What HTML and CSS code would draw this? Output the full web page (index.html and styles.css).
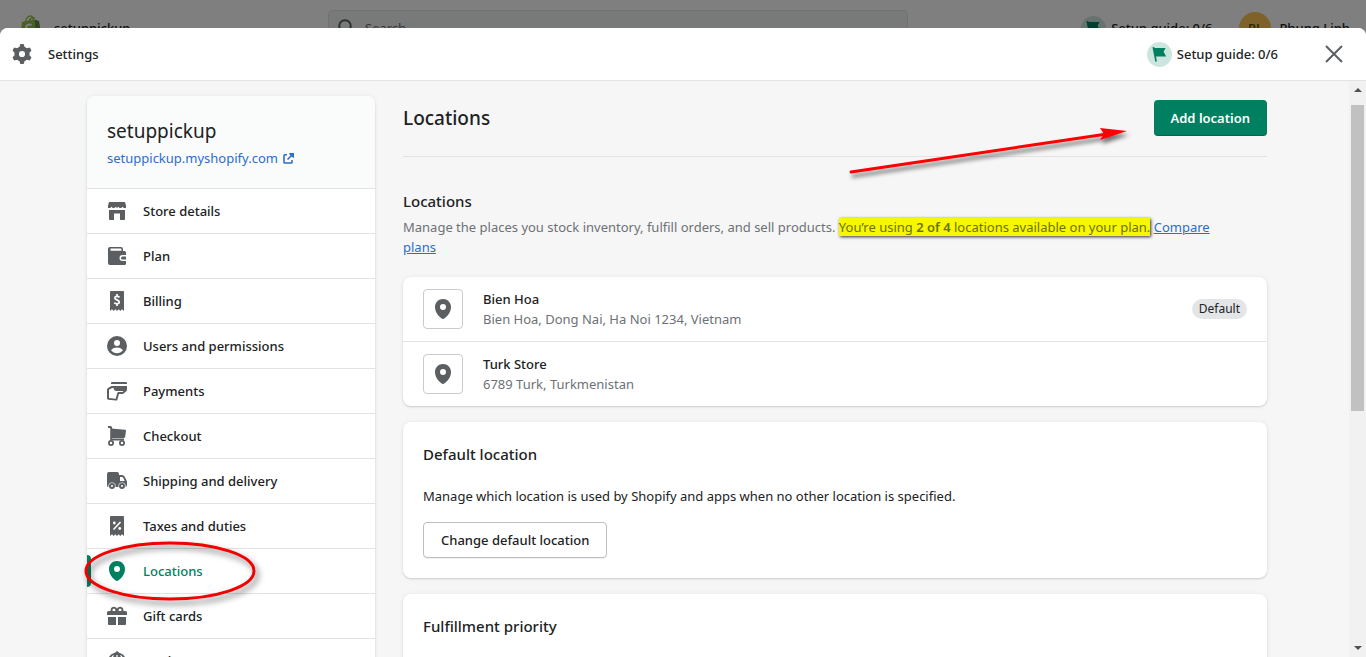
FILE: index.html
```html
<!DOCTYPE html>
<html lang="en">
<head>
<meta charset="utf-8">
<title>setuppickup - Settings - Locations</title>
<link rel="stylesheet" href="styles.css">
</head>
<body>
<svg class="sprite" aria-hidden="true">
  <symbol id="pin" viewBox="0 0 20 20"><path fill-rule="evenodd" d="M10 0c-4.411 0-8 3.500-8 7.900 0 7.600 7.012 11.700 7.416 11.950a1.200 1.200 0 0 0 1.168 0c.404-.25 7.416-4.350 7.416-11.950 0-4.400-3.589-7.900-8-7.900zm0 11a3 3 0 1 1 0-6 3 3 0 0 1 0 6z"/></symbol>
  <symbol id="flag" viewBox="0 0 25 25"><circle cx="12.500" cy="12.500" r="12.500" fill="#cce6df"/><path d="M5.500 5.300L7.200 5l.4 1h11l-2 3.700 2.600 4.700H9l.9 5.100-1.600.3z"/></symbol>
</svg>

<div class="topbar">
  <div class="brand">
    <svg class="bag" viewBox="0 0 22 26" aria-hidden="true">
      <path d="M5 8C6 3 8.500 1 10.500 1S14 3.500 13.500 7M8 8c1-4 4-6 7-5" fill="none" stroke="#95bf47" stroke-width="1.300"/>
      <path d="M2 7l12.500-2.500L15 25 0 22z" fill="#95bf47"/><path d="M14.500 4.500l4.500 1.500 3 17-7 2z" fill="#5e8e3e"/>
      <path d="M11.500 10c-3-1.500-5.500.2-5.300 2.300.2 2.300 4 2.400 3.800 4.700-.2 2-2.500 2-5 .7" fill="none" stroke="#fff" stroke-width="2"/>
    </svg>
    <span>setuppickup</span>
  </div>
  <label class="search">
    <svg viewBox="0 0 20 20" aria-hidden="true"><circle cx="8" cy="8" r="5.800" fill="none" stroke="#5c5f62" stroke-width="2"/><path d="M12.500 12.500l6 6" stroke="#5c5f62" stroke-width="2"/></svg>
    <input type="search" placeholder="Search" aria-label="Search">
  </label>
  <div class="account">
    <a class="guide" href="#"><svg aria-hidden="true"><use href="#flag"/></svg>Setup guide: 0/6</a>
    <button class="user" type="button"><span class="avatar">PL</span>Phung Linh</button>
  </div>
</div>
<div class="backdrop"></div>

<div class="modal" role="dialog" aria-labelledby="modal-title">
  <header class="modal-header">
    <svg class="gear" viewBox="0 0 20 20" aria-hidden="true">
      <circle cx="10" cy="10" r="5.300" fill="none" stroke="#5c5f62" stroke-width="4.400"/>
      <g fill="#5c5f62">
        <path id="tooth" d="M6 4.200l1.500-1.200.5-2.200q.1-.8.900-.8h2.200q.8 0 .9.800l.5 2.200 1.500 1.200z"/>
        <use href="#tooth" transform="rotate(60 10 10)"/><use href="#tooth" transform="rotate(120 10 10)"/><use href="#tooth" transform="rotate(180 10 10)"/><use href="#tooth" transform="rotate(240 10 10)"/><use href="#tooth" transform="rotate(300 10 10)"/>
      </g>
    </svg>
    <h1 id="modal-title">Settings</h1>
    <a class="guide" href="#"><svg aria-hidden="true"><use href="#flag"/></svg>Setup guide: 0/6</a>
    <button class="close" type="button" aria-label="Close"><svg viewBox="0 0 18 18" aria-hidden="true"><path d="M1 1l16 16M17 1L1 17" stroke="#5c5f62" stroke-width="2"/></svg></button>
  </header>

  <div class="modal-body">
    <div class="scroll">
      <nav class="sidebar card" aria-label="Settings">
        <div class="store">
          <h2>setuppickup</h2>
          <a href="#">setuppickup.myshopify.com
            <svg viewBox="0 0 11 11" aria-hidden="true"><path d="M4 1.700H1.800Q1 1.700 1 2.500v6.700q0 .8.800.8h6.400q.8 0 .8-.8V7" fill="none" stroke="currentColor" stroke-width="1.600"/><path d="M4.500 6.500l5-5" stroke="currentColor" stroke-width="1.600"/><path d="M6 0h5v5L9 4 7 2z"/></svg>
          </a>
        </div>
        <ul>
          <li><a href="#"><svg viewBox="0 0 20 20"><path d="M2 1h16l1 3.500V7h-2.200L15.500 5.700 14.200 7h-1.600l-1.300-1.300L10 7 8.700 5.700 7.400 7H5.800L4.500 5.700 3.200 7H1V4.500z"/><path d="M2 9h16v9q0 1-1 1h-4v-6.500H7V19H3q-1 0-1-1z"/></svg>Store details</a></li>
          <li><a href="#"><svg viewBox="0 0 20 20"><path fill-rule="evenodd" d="M1 3q0-2 2-2h11q2 0 2 2v2h1.500Q19 5 19 6.500V9h-3.500a3 3 0 0 0 0 6H19v2.500q0 1.500-1.500 1.500H3q-2 0-2-2zm2.500-.4v2.200H14.500V3.500q0-.9-.9-.9z"/><path d="M15.500 10.500H19v3h-3.500a1.500 1.500 0 0 1 0-3z"/></svg>Plan</a></li>
          <li><a href="#"><svg viewBox="0 0 20 20"><path d="M3 1q0-1 1-1h12q1 0 1 1v19l-2-1.700L13.300 20l-1.600-1.700L10 20l-1.700-1.700L6.700 20 5 18.300 3 20z"/><path d="M12.500 6.300C11 4.800 7.800 5 7.800 7s4.500 1.700 4.500 4c0 2.200-3.500 2.200-5 .6M10 3v2.500M10 12.500V15" fill="none" stroke="#fff" stroke-width="1.700"/></svg>Billing</a></li>
          <li><a href="#"><svg viewBox="0 0 20 20"><circle cx="10" cy="10" r="10"/><circle cx="10" cy="7" r="3" fill="#fff"/><path d="M4 14.200c1.500-2 4-2.700 6-2.700s4.500.7 6 2.700c-1.700 2-3.700 3-6 3s-4.300-1-6-3z" fill="#fff"/></svg>Users and permissions</a></li>
          <li><a href="#"><svg viewBox="0 0 20 20"><path d="M5 1h14q1 0 1 1v1H4V2q0-1 1-1z"/><path fill-rule="evenodd" d="M4.500 5H20v3.500q0 1.500-1.200 2.300L16.500 12.500Q15.700 13 14.800 13H12l-1.600 5.700q-.3 1-1.300.9L1.200 18.700Q0 18.500 0 17.300V9q0-1.200.9-1.900zM5.200 7L2 8.800V16.900l6.700.8 1.500-5.500q.3-1.200 1.500-1.200h3q1.500 0 1.800-1H9.500Q7 10 6.500 7z"/></svg>Payments</a></li>
          <li><a href="#"><svg viewBox="0 0 20 20"><path d="M1 1h2.200q1 0 1 1v11.500H17" fill="none" stroke="#5c5f62" stroke-width="2"/><path d="M4 2.500l14.200 1.200q.9.100.8 1l-.8 5.800q-.2 1.500-1.700 1.500H4z"/><g fill="#fff" stroke="#5c5f62" stroke-width="1.800"><circle cx="4" cy="17" r="2.100"/><circle cx="15" cy="17" r="2.100"/></g></svg>Checkout</a></li>
          <li><a href="#"><svg viewBox="0 0 20 20"><path fill-rule="evenodd" d="M0 3Q0 1 2 1h8q2 0 2 2v1h3q1.800 0 2.600 1.500l2 4q.4.700.4 1.500v3q0 2-2 2H1.500Q0 16 0 14.500zM13 6v4h4.700l-1.500-3.200Q15.700 6 15 6z"/><circle cx="5" cy="15" r="3.600" fill="#fff"/><circle cx="15" cy="15" r="3.600" fill="#fff"/><g fill="#fff" stroke="#5c5f62" stroke-width="2"><circle cx="5" cy="15" r="2"/><circle cx="15" cy="15" r="2"/></g></svg>Shipping and delivery</a></li>
          <li><a href="#"><svg viewBox="0 0 20 20"><path d="M3 1q0-1 1-1h12q1 0 1 1v19l-2-1.700L13.300 20l-1.600-1.700L10 20l-1.700-1.700L6.700 20 5 18.300 3 20z"/><path d="M6.500 13.500l7-7.500" stroke="#fff" stroke-width="1.600"/><circle cx="7.300" cy="7" r="1.400" fill="#fff"/><circle cx="12.700" cy="12.500" r="1.400" fill="#fff"/></svg>Taxes and duties</a></li>
          <li class="active"><a href="#" aria-current="page"><svg><use href="#pin"/></svg>Locations</a>
            <svg class="circled" viewBox="0 0 184 72" aria-hidden="true"><ellipse cx="86" cy="31" rx="84" ry="28" fill="none" stroke="#f40000" stroke-width="3"/></svg>
          </li>
          <li><a href="#"><svg viewBox="0 0 20 20"><path d="M1.500 5H18.500Q20 5 20 6.500V9H0V6.500Q0 5 1.500 5zM1 11h8v8H2q-1 0-1-1zM11 11h8v7q0 1-1 1h-7z"/><path d="M9.300 6V3.800a2.400 2.400 0 1 0-4.300 1.700M10.700 6V3.800a2.400 2.400 0 1 1 4.300 1.700" fill="none" stroke="#5c5f62" stroke-width="2"/></svg>Gift cards</a></li>
          <li><a href="#"><svg viewBox="0 0 20 20"><path d="M10 0l2.500 2H13q5 1.500 6 7v2H1V9q1-5.500 6-7h.5z"/><path d="M6.500 4.500Q4.500 6 4 9M10 4v5M13.500 4.500Q15.500 6 16 9" fill="none" stroke="#fff" stroke-width="1.200"/></svg>Markets</a></li>
        </ul>
      </nav>

      <main>
        <div class="page-header">
          <h2>Locations</h2>
          <button class="primary" type="button">Add location</button>
          <svg class="arrow" viewBox="0 0 290 60" aria-hidden="true"><path d="M4 50L260 12" stroke="#f00" stroke-width="3" stroke-linecap="round"/><path d="M253 6l27 3-27 9 4-6z" fill="#f00"/></svg>
        </div>

        <section class="intro">
          <h3>Locations</h3>
          <p>Manage the places you stock inventory, fulfill orders, and sell products. <mark>You’re using <b>2 of 4</b> locations available on your plan.</mark> <a href="#">Compare plans</a></p>
        </section>

        <ul class="card locations">
          <li>
            <span class="thumb"><svg aria-hidden="true"><use href="#pin"/></svg></span>
            <div><h4>Bien Hoa</h4><p>Bien Hoa, Dong Nai, Ha Noi 1234, Vietnam</p></div>
            <span class="badge">Default</span>
          </li>
          <li>
            <span class="thumb"><svg aria-hidden="true"><use href="#pin"/></svg></span>
            <div><h4>Turk Store</h4><p>6789 Turk, Turkmenistan</p></div>
          </li>
        </ul>

        <section class="card panel">
          <h3>Default location</h3>
          <p>Manage which location is used by Shopify and apps when no other location is specified.</p>
          <button class="secondary" type="button">Change default location</button>
        </section>

        <section class="card panel">
          <h3>Fulfillment priority</h3>
        </section>
      </main>
    </div>
    <div class="scrollbar" aria-hidden="true">
      <svg viewBox="0 0 8 4"><path d="M0 4l4-4 4 4z"/></svg>
      <div class="track"><div class="grip"></div></div>
      <svg viewBox="0 0 8 4"><path d="M0 0l4 4 4-4z"/></svg>
    </div>
  </div>
</div>
</body>
</html>
```
FILE: styles.css
```css
*, *::before { box-sizing: border-box; }

body, h1, h2, h3, h4, p, ul { margin: 0; padding: 0; }

body {
  height: 100vh;
  overflow: hidden;
  background: #f6f6f7;
  color: #202223;
  font: 400 13px/20px "Noto Sans", "Open Sans", sans-serif;
}

ul { list-style: none; }
button, input { font: inherit; color: inherit; }
button { cursor: pointer; }
a { color: #2c6ecb; text-decoration: none; }
svg { flex: none; fill: #5c5f62; }

.sprite { position: absolute; width: 0; height: 0; }

/* Admin bar behind the dialog */
.topbar {
  display: flex;
  align-items: center;
  height: 56px;
  padding: 0 16px 0 20px;
  background: #fff;
  font-weight: 500;
}
.brand { display: flex; align-items: center; gap: 12px; flex: 0 0 308px; }
.bag { width: 22px; height: 30px; }
.search {
  display: flex;
  align-items: center;
  gap: 6px;
  flex: 0 1 580px;
  height: 36px;
  padding: 0 8px;
  border: 1px solid #e1e3e5;
  border-radius: 4px;
  background: #f1f2f3;
}
.search svg { width: 20px; height: 20px; }
.search input { flex: 1; min-width: 0; border: 0; outline: 0; background: none; font-weight: 400; }
.search input::placeholder { color: #6d7175; }
.account { display: flex; align-items: center; gap: 27px; margin-left: auto; }
.guide { display: flex; align-items: center; gap: 5px; color: #202223; font-weight: 500; white-space: nowrap; }
.guide svg { width: 25px; height: 25px; fill: #008060; }
.user { display: flex; align-items: center; gap: 8px; padding: 0; border: 0; background: none; }
.avatar {
  width: 32px;
  height: 32px;
  border-radius: 50%;
  background: #ffc453;
  line-height: 32px;
  color: #594415;
}
.backdrop { position: absolute; inset: 0; background: rgba(0, 0, 0, .5); }

/* Dialog */
.modal {
  position: absolute;
  inset: 28px 0 0;
  display: flex;
  flex-direction: column;
  overflow: hidden;
  border-radius: 8px 8px 0 0;
  background: #f6f6f7;
}
.modal-header {
  display: flex;
  align-items: center;
  flex: none;
  height: 53px;
  padding: 0 23px 0 12px;
  border-bottom: 1px solid #e1e3e5;
  background: #fff;
}
.gear { width: 20px; height: 20px; }
.modal-header h1 { margin: 0 auto 0 16px; font-size: 13px; font-weight: 500; }
.close { display: flex; margin-left: 47px; padding: 0; border: 0; background: none; }
.close svg { width: 18px; height: 18px; }
.modal-body { display: flex; flex: 1; min-height: 0; }
.scroll {
  display: grid;
  grid-template-columns: 1fr 3fr;
  align-items: start;
  gap: 28px;
  flex: 1;
  padding: 15px 82px 20px 87px;
  overflow-y: auto;
  scrollbar-width: none;
}

.card {
  border-radius: 8px;
  background: #fff;
  box-shadow: 0 0 5px rgba(23, 24, 24, .05), 0 1px 2px rgba(0, 0, 0, .15);
}

/* Settings navigation */
.store {
  padding: 20px 20px 18px;
  border-radius: 8px 8px 0 0;
  background: #fafbfb;
}
.store h2 { font-size: 19px; line-height: 30px; font-weight: 400; }
.store a { display: flex; align-items: center; gap: 5px; height: 24px; }
.store svg { width: 11px; height: 11px; fill: currentColor; }
.sidebar li { position: relative; border-top: 1px solid #e1e3e5; }
.sidebar li a {
  display: flex;
  align-items: center;
  gap: 16px;
  height: 44px;
  padding: 0 20px;
  color: #202223;
  font-weight: 500;
}
.sidebar li a svg { width: 20px; height: 20px; }
.sidebar .active a { color: #008060; }
.sidebar .active a svg { fill: #008060; }
.sidebar .active::before {
  content: "";
  position: absolute;
  left: 0;
  top: 6px;
  width: 4px;
  height: 32px;
  border-radius: 0 4px 4px 0;
  background: #008060;
}
.circled {
  position: absolute;
  z-index: 1;
  left: -3px;
  top: -9px;
  width: 184px;
  height: 72px;
  pointer-events: none;
  filter: drop-shadow(3px 4px 3px rgba(0, 0, 0, .55));
}

/* Locations page */
.page-header {
  position: relative;
  display: flex;
  align-items: center;
  justify-content: space-between;
  padding: 4px 0 20px;
  border-bottom: 1px solid #e1e3e5;
}
.page-header h2 { font-size: 19px; line-height: 28px; font-weight: 500; }
.primary, .secondary {
  height: 36px;
  padding: 0 17px;
  border-radius: 4px;
}
.primary {
  border: 0;
  background: #008060;
  box-shadow: inset 0 -1px 0 rgba(0, 0, 0, .2);
  color: #fff;
  font-weight: 600;
}
.secondary {
  border: 1px solid #babfc3;
  background: #fff;
  box-shadow: 0 1px 0 rgba(0, 0, 0, .05);
  font-weight: 500;
}
.arrow {
  position: absolute;
  right: 130px;
  top: 26px;
  width: 290px;
  height: 60px;
  pointer-events: none;
  filter: drop-shadow(2px 4px 2px rgba(0, 0, 0, .55));
}
.intro { padding: 32px 0 20px; color: #6d7175; }
.intro h3, .panel h3 { color: #202223; font-size: 15px; line-height: 24px; font-weight: 500; }
.intro h3 { margin-bottom: 4px; }
.intro p { padding-right: 32px; }
.intro p a { text-decoration: underline; }
mark {
  background: #f7f700;
  box-shadow: 1px 1px 3px rgba(0, 0, 0, .8);
  color: #6d7100;
}
mark b { font-weight: 600; }

.locations li { display: flex; align-items: center; gap: 20px; padding: 12px 20px; }
.locations li + li { border-top: 1px solid #e1e3e5; }
.locations h4 { font-size: 13px; font-weight: 500; }
.locations p { color: #6d7175; }
.thumb {
  display: flex;
  align-items: center;
  justify-content: center;
  width: 40px;
  height: 40px;
  border: 1px solid #c9cccf;
  border-radius: 4px;
}
.thumb svg { width: 20px; height: 20px; }
.badge {
  margin-left: auto;
  padding: 0 7px;
  border-radius: 10px;
  background: #e4e5e7;
  font-size: 12px;
}

.panel { min-height: 156px; margin-top: 16px; padding: 20px; }
.panel p { margin: 20px 0 16px; }

/* Scroll bar */
.scrollbar {
  display: flex;
  flex-direction: column;
  align-items: center;
  gap: 13px;
  width: 17px;
  padding: 7px 0;
  background: #f1f1f1;
}
.scrollbar svg { width: 8px; height: 4px; fill: #505050; }
.track { flex: 1; align-self: stretch; padding: 0 2px; }
.grip { height: 58%; background: #c1c1c1; }
```
